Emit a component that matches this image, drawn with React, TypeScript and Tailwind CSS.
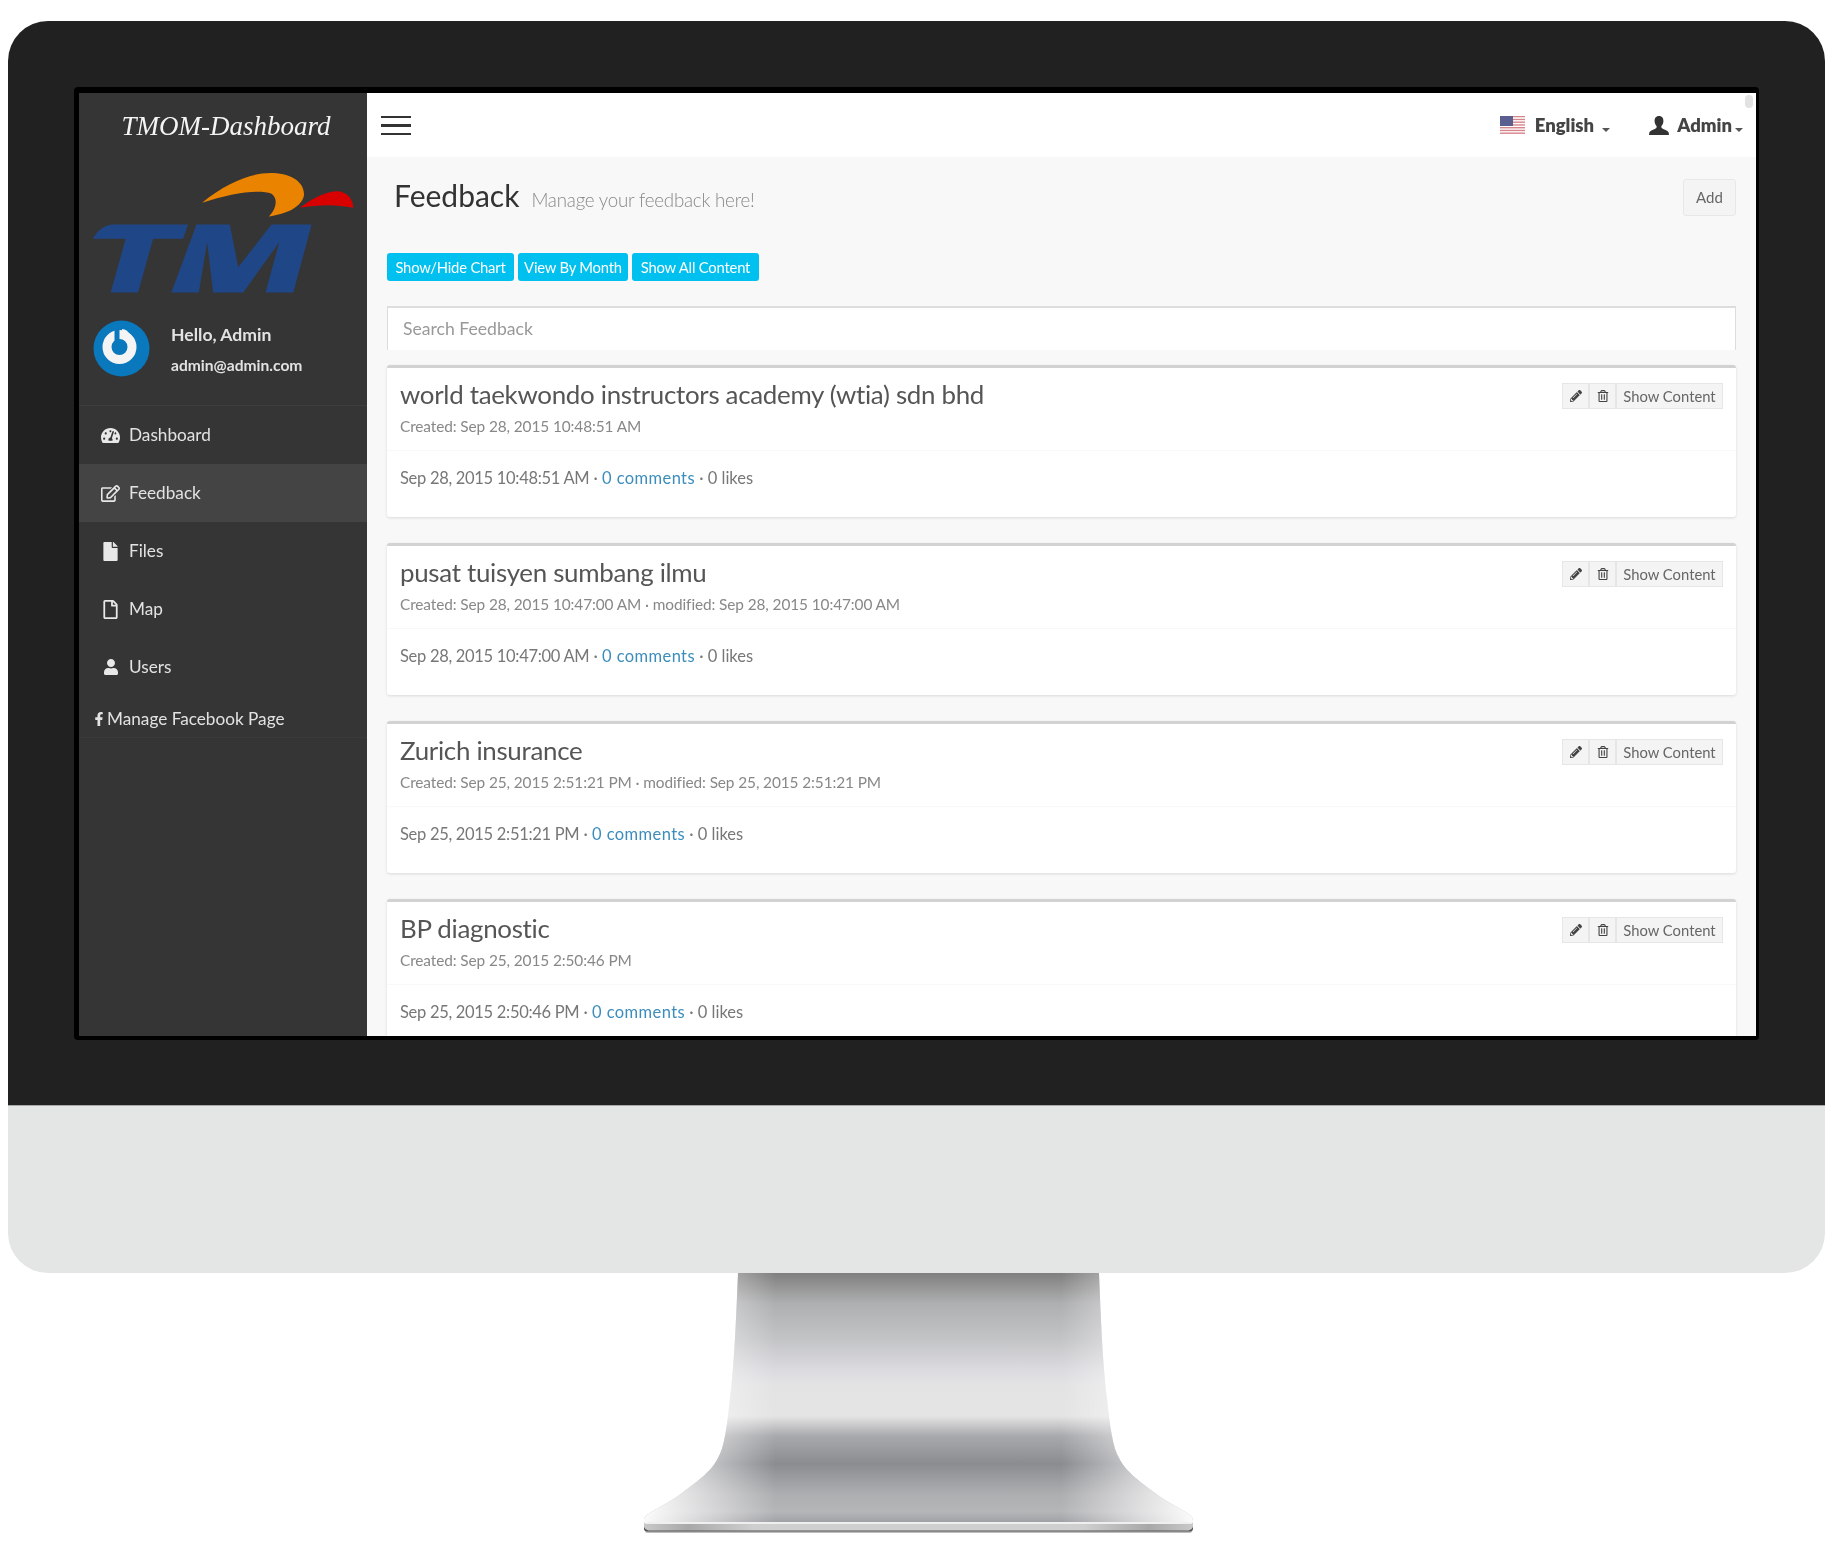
import { FaTachometerAlt, FaRegEdit, FaFile, FaRegFile, FaUser, FaFacebookF, FaPencilAlt, FaRegTrashAlt } from "react-icons/fa";

const font = { fontFamily: "Lato, 'Noto Sans', sans-serif" };

function Caret() {
  return <span className="inline-block w-0 h-0 border-x-[4px] border-x-transparent border-t-[4px] border-t-[#555]" />;
}

function Flag() {
  return (
    <svg width="25" height="19" viewBox="0 0 25 19">
      {Array.from({ length: 7 }).map((_, i) => (
        <rect key={i} x="0" y={i * 2.75} width="25" height="1.4" fill="#d8848c" />
      ))}
      <rect x="0" y="1.4" width="25" height="1.4" fill="#f3eaea" />
      <rect x="0" y="0" width="13" height="10" fill="#5a5f8f" />
    </svg>
  );
}

function Bust() {
  return (
    <svg width="20" height="19" viewBox="0 0 20 19">
      <path d="M10 0C6.8 0 5.4 2.4 5.6 5.2c.1 1.9.9 3.6 1.9 4.8.3.9.2 1.7-.5 2.2C5 13.500 1.500 14.300.4 16.200L0 19h20l-.4-2.800c-1.100-1.900-4.600-2.700-6.600-4-.7-.5-.8-1.300-.5-2.200 1-1.200 1.800-2.900 1.900-4.800C14.600 2.400 13.200 0 10 0z" fill="#333" />
    </svg>
  );
}

function Logo() {
  return (
    <svg width="262" height="122" viewBox="280 515 785 365">
      <path d="M607 607C680 545 760 515 820 518C880 520 915 550 912 585C905 620 860 640 807 648C830 625 835 595 815 580C775 565 690 580 607 607Z" fill="#ea8400" />
      <path d="M900 622C950 585 990 570 1020 573C1045 578 1060 600 1060 622C1010 612 960 612 900 622Z" fill="#d90000" />
      <path d="M280 715C290 695 310 672 345 672L565 672L550 715L460 715L415 876L333 876L378 715Z" fill="#1f4788" />
      <path d="M590 672L690 672L715 800L815 672L935 672L880 876L797 876L838 725L730 876L640 876L622 725L597 876L515 876Z" fill="#1f4788" />
    </svg>
  );
}

function Avatar() {
  return (
    <svg width="57" height="57" viewBox="0 0 57 57">
      <circle cx="28.500" cy="28.500" r="28" fill="#0a78bd" />
      <circle cx="26.500" cy="27" r="12.500" fill="none" stroke="#f4f4f4" strokeWidth="9" />
      <path d="M29 9C33 9.500 35 11 36 14L31 20Z" fill="#f4f4f4" />
      <rect x="21.500" y="8" width="5" height="20" rx="2.500" fill="#0a78bd" />
    </svg>
  );
}

function Stand() {
  const outline =
    "M96 0L457 0C459 50 461 95 465 125C468 155 471 175 477 185C483 197 493 205 513 220C533 235 551 240 551 247L551 251L2 251L2 247C2 240 20 235 40 220C60 205 70 197 76 185C82 175 85 155 88 125C92 95 94 50 96 0Z";
  return (
    <svg width="553" height="265" viewBox="0 0 553 265" className="ml-[634px] block">
      <defs>
        <linearGradient id="sv" x1="0" y1="0" x2="0" y2="1">
          <stop offset="0" stopColor="#7f7f7f" />
          <stop offset="0.12" stopColor="#aeafb0" />
          <stop offset="0.27" stopColor="#c4c5c7" />
          <stop offset="0.39" stopColor="#dcdce0" />
          <stop offset="0.45" stopColor="#e3e3e4" />
          <stop offset="0.57" stopColor="#e4e4e4" />
          <stop offset="0.65" stopColor="#a8a9ac" />
          <stop offset="0.76" stopColor="#8a8c90" />
          <stop offset="0.88" stopColor="#adaeb0" />
          <stop offset="0.95" stopColor="#b5b6b8" />
          <stop offset="1" stopColor="#9d9ea2" />
        </linearGradient>
        <linearGradient id="sh" x1="0" y1="0" x2="1" y2="0">
          <stop offset="0" stopColor="#fff" stopOpacity="0.95" />
          <stop offset="0.14" stopColor="#fff" stopOpacity="0.4" />
          <stop offset="0.24" stopColor="#fff" stopOpacity="0" />
          <stop offset="0.76" stopColor="#fff" stopOpacity="0" />
          <stop offset="0.86" stopColor="#fff" stopOpacity="0.4" />
          <stop offset="1" stopColor="#fff" stopOpacity="0.95" />
        </linearGradient>
        <linearGradient id="pl" x1="0" y1="0" x2="1" y2="0">
          <stop offset="0" stopColor="#c9c9c9" />
          <stop offset="0.08" stopColor="#a8a8a8" />
          <stop offset="0.2" stopColor="#cfcfcf" />
          <stop offset="0.8" stopColor="#cfcfcf" />
          <stop offset="0.92" stopColor="#a8a8a8" />
          <stop offset="1" stopColor="#c9c9c9" />
        </linearGradient>
      </defs>
      <rect x="3" y="255" width="547" height="5" rx="2.500" fill="#bdbdbd" />
      <rect x="2" y="252" width="549" height="6.500" rx="3" fill="#555" />
      <path d={outline} fill="url(#sv)" />
      <path d={outline} fill="url(#sh)" />
      <path d="M2 248C2 250 3 251 5 251L548 251C550 251 551 250 551 248L551 253C551 255 549 257.500 545 257.500L8 257.500C4 257.500 2 255 2 253Z" fill="url(#pl)" />
      <rect x="5" y="249" width="543" height="2" fill="#efefef" />
    </svg>
  );
}

const nav = [
  { icon: <FaTachometerAlt size={19} />, label: "Dashboard" },
  { icon: <FaRegEdit size={19} />, label: "Feedback", active: true },
  { icon: <FaFile size={19} />, label: "Files" },
  { icon: <FaRegFile size={19} />, label: "Map" },
  { icon: <FaUser size={16} />, label: "Users" },
];

const cards = [
  { title: "world taekwondo instructors academy (wtia) sdn bhd", meta: "Created: Sep 28, 2015 10:48:51 AM", date: "Sep 28, 2015 10:48:51 AM" },
  { title: "pusat tuisyen sumbang ilmu", meta: "Created: Sep 28, 2015 10:47:00 AM · modified: Sep 28, 2015 10:47:00 AM", date: "Sep 28, 2015 10:47:00 AM" },
  { title: "Zurich insurance", meta: "Created: Sep 25, 2015 2:51:21 PM · modified: Sep 25, 2015 2:51:21 PM", date: "Sep 25, 2015 2:51:21 PM" },
  { title: "BP diagnostic", meta: "Created: Sep 25, 2015 2:50:46 PM", date: "Sep 25, 2015 2:50:46 PM" },
];

function Card({ title, meta, date }: { title: string; meta: string; date: string }) {
  return (
    <div className="shrink-0 h-[152px] bg-white rounded-[3px] border-t-[3px] border-[#d2d2d2] shadow-[0_1px_3px_rgba(0,0,0,0.12)] mb-[26px]">
      <div className="h-[83px] px-[13px] relative border-b border-[#f8f8f8]">
        <div className="pt-[9px] text-[25.900px] leading-[34px] text-[#555] tracking-[-0.3px]">{title}</div>
        <div className="text-[15.400px] leading-[22px] mt-[4px] text-[#888] tracking-[-0.1px]">{meta}</div>
        <div className="absolute right-[13px] top-[15px] flex text-[#666]">
          <div className="w-[27px] h-[26px] bg-[#f4f4f4] border border-[#e6e6e6] flex items-center justify-center"><FaPencilAlt size={12} color="#444" /></div>
          <div className="w-[27px] h-[26px] bg-[#f4f4f4] border border-[#e6e6e6] flex items-center justify-center"><FaRegTrashAlt size={12} color="#444" /></div>
          <div className="w-[107px] h-[26px] bg-[#f4f4f4] border border-[#e6e6e6] flex items-center justify-center text-[14.800px] text-[#666]">Show Content</div>
        </div>
      </div>
      <div className="px-[13px] pt-[15px] text-[16.500px] leading-[24px] text-[#777]">
        <span className="tracking-[-0.3px]">{date}</span> · <span className="text-[#3c8dbc] tracking-[0.4px]">0 comments</span> · 0 likes
      </div>
    </div>
  );
}

export default function App() {
  return (
    <div className="w-[1839px] h-[1542px] bg-white pt-[21px] pl-[8px] overflow-hidden" style={font}>
      <div className="w-[1817px] h-[1084px] bg-[#212121] rounded-t-[40px] pt-[66px] pl-[66px]">
        <div className="w-[1685px] h-[953px] bg-black rounded-[4px] pl-[5px] pt-[6px] pr-[3px] pb-[4px]">
          <div className="w-full h-full flex overflow-hidden blur-[0.3px]">
            <aside className="w-[288px] shrink-0 bg-[#353535] text-[#e2e2e2] flex flex-col">
              <div className="h-[64px] flex items-center justify-center pt-[2px] pl-[6px] text-[#f4f4f4] italic text-[27px]" style={{ fontFamily: "'Liberation Serif', serif" }}>TMOM-Dashboard</div>
              <div className="pl-[14px] pt-[15px]"><Logo /></div>
              <div className="flex pl-[14px] pt-[26px] h-[112px] border-b border-[#3e3e3e]">
                <Avatar />
                <div className="ml-[21px] font-bold">
                  <div className="text-[17.600px] leading-[24px] pt-[3px]">Hello, Admin</div>
                  <div className="text-[15.600px] leading-[20px] mt-[8px]">admin@admin.com</div>
                </div>
              </div>
              {nav.map((n) => (
                <div key={n.label} className={`flex items-center h-[58px] ${n.active ? "bg-[#444444]" : ""} text-[17.200px]`}>
                  <span className="w-[50px] flex justify-center pl-[13px] text-[#e8e8e8]">{n.icon}</span>
                  <span>{n.label}</span>
                </div>
              ))}
              <div className="flex items-center h-[42px] pl-[13px] text-[17.200px] border-b border-[#3a3a3a] pb-[6px] pt-[10px]">
                <FaFacebookF size={14} className="mr-[1px]" />
                <span>Manage Facebook Page</span>
              </div>
            </aside>
            <main className="flex-1 min-w-0 bg-[#f8f8f8] flex flex-col relative">
              <header className="h-[64px] bg-white shrink-0 flex items-center">
                <div className="ml-[14px] mt-[1px] w-[30px] flex flex-col gap-[6px]">
                  <div className="h-[2.500px] bg-[#333]" />
                  <div className="h-[2.500px] bg-[#333]" />
                  <div className="h-[2.500px] bg-[#333]" />
                </div>
                <div className="ml-auto flex items-center text-[#444] font-extrabold text-[18.500px]">
                  <Flag />
                  <span className="ml-[10px] pt-[2px]">English</span>
                  <span className="ml-[8px] mr-[39px] pt-[2px]"><Caret /></span>
                  <Bust />
                  <span className="ml-[8px] pt-[2px]">Admin</span>
                  <span className="ml-[3px] mr-[13px] pt-[2px]"><Caret /></span>
                </div>
                <div className="absolute top-[2px] right-[3px] w-[8px] h-[13px] rounded-[4px] bg-[#e2e2e2]" />
              </header>
              <div className="px-[20px] flex-1 min-h-0 overflow-hidden flex flex-col">
                <div className="h-[58px] mt-[21px] shrink-0 flex">
                  <div className="pl-[7px] mt-[-2px] text-[30px] leading-[38px] text-[#333]">Feedback</div>
                  <div className="ml-[12px] pt-[8px] text-[18.700px] leading-[28px] text-[#888] font-light tracking-[-0.2px]">Manage your feedback here!</div>
                  <div className="ml-auto mt-[1px] w-[53px] h-[37px] bg-[#f4f4f4] border border-[#e8e8e8] rounded-[3px] flex items-center justify-center text-[15px] text-[#666]">Add</div>
                </div>
                <div className="flex gap-[4px] h-[28px] shrink-0 mt-[17px]">
                  {[["Show/Hide Chart", "w-[127px]"], ["View By Month", "w-[110px]"], ["Show All Content", "w-[127px]"]].map(([t, w]) => (
                    <div key={t} className={`${w} h-[28px] rounded-[3px] bg-[#00c0ef] text-white text-[14.800px] flex items-center justify-center tracking-[-0.2px]`}>{t}</div>
                  ))}
                </div>
                <div className="h-[44px] shrink-0 mt-[25px] bg-white border-t-2 border-x border-[#ddd] pl-[15px] flex items-center text-[17.600px] text-[#999]">Search Feedback</div>
                <div className="h-[15px] shrink-0" />
                {cards.map((c) => <Card key={c.title} {...c} />)}
              </div>
            </main>
          </div>
        </div>
      </div>
      <div className="w-[1817px] h-[168px] bg-[#e4e6e5] rounded-b-[40px] border-t border-[#aaa]" />
      <Stand />
    </div>
  );
}
